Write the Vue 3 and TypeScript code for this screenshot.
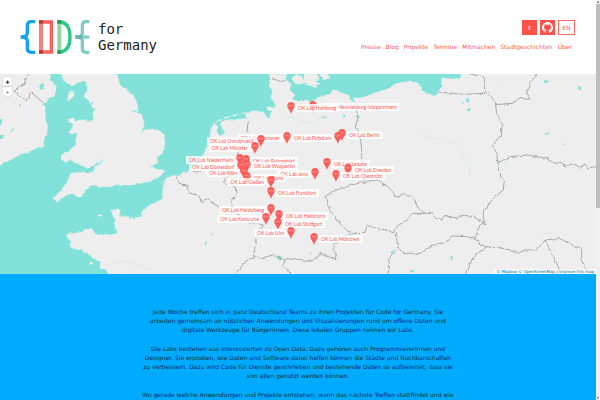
<script setup lang="ts">
interface Lab {
  name: string
  x: number
  y: number
  side: 'left' | 'right'
}

const nav: string[] = ['Presse', 'Blog', 'Projekte', 'Termine', 'Mitmachen', 'Stadtgeschichten', 'Über']

// Pin centres, in pixels from the map's top left corner
const labs: Lab[] = [
  { name: 'Mecklenburg-Vorpommern', x: 313, y: 33, side: 'right' },
  { name: 'Hamburg', x: 291, y: 34, side: 'right' },
  { name: 'Berlin', x: 342, y: 61, side: 'right' },
  { name: 'Potsdam', x: 338, y: 64, side: 'left' },
  { name: 'Hannover', x: 287, y: 64, side: 'left' },
  { name: 'Osnabrueck', x: 261, y: 67, side: 'left' },
  { name: 'Münster', x: 255, y: 74, side: 'left' },
  { name: 'Niederrhein', x: 240, y: 86, side: 'left' },
  { name: 'Ruhrgebiet', x: 246, y: 87, side: 'right' },
  { name: 'Leipzig', x: 327, y: 90, side: 'right' },
  { name: 'Wuppertal', x: 247, y: 92, side: 'right' },
  { name: 'Düsseldorf', x: 241, y: 93, side: 'left' },
  { name: 'Dresden', x: 348, y: 96, side: 'right' },
  { name: 'Köln', x: 244, y: 99, side: 'left' },
  { name: 'Jena', x: 315, y: 100, side: 'left' },
  { name: 'Chemnitz', x: 336, y: 102, side: 'right' },
  { name: 'Bonn', x: 247, y: 104, side: 'right' },
  { name: 'Gießen', x: 271, y: 108, side: 'left' },
  { name: 'Frankfurt', x: 271, y: 119, side: 'right' },
  { name: 'Heidelberg', x: 271, y: 136, side: 'left' },
  { name: 'Heilbronn', x: 279, y: 142, side: 'right' },
  { name: 'Karlsruhe', x: 266, y: 145, side: 'left' },
  { name: 'Stuttgart', x: 278, y: 150, side: 'right' },
  { name: 'Ulm', x: 291, y: 159, side: 'left' },
  { name: 'München', x: 314, y: 165, side: 'right' },
]

// Map outlines, three units to a pixel
const land: string[] = [
  '0,12 150,12 152,22 147,30 158,36 168,45 166,60 162,78 148,80 140,95 128,98 135,110 136,150 142,165 140,195 132,215 128,236 115,232 100,238 70,250 40,265 0,285',
  '183,12 190,30 200,38 215,45 235,38 245,30 258,30 262,38 257,45 265,55 255,70 258,85 270,100 285,90 278,105 285,120 276,130 280,150 270,157 258,150 240,150 225,155 222,145 208,147 208,155 222,165 215,180 203,188 222,190 232,186 230,200 225,225 205,245 180,260 185,270 200,270 195,275 215,270 235,282 262,294 280,285 308,267 298,282 285,290 282,305 262,308 235,308 212,310 205,330 185,360 158,388 178,394 185,384 200,375 218,370 232,380 245,377 255,360 262,352 285,345 300,350 325,350 355,342 365,352 370,345 395,345 420,340 450,334 475,322 488,310 492,300 465,298 450,292 475,277 470,262 485,250 495,220 488,190 470,178 450,178 435,180 424,188 432,162 424,132 388,122 415,122 410,98 400,75 385,60 362,48 350,12',
  '205,90 200,78 212,66 222,68 216,84',
  '325,612 320,600 300,590 303,575 275,560 265,550 245,540 215,533 208,522 222,518 205,510 200,495 215,490 240,488 255,480 275,478 290,497 310,492 330,495 355,490 345,470 345,450 333,420 355,418 362,440 400,445 425,440 420,430 450,405 470,397 488,386 490,330 500,325 540,315 570,300 595,280 615,245 628,215 633,180 643,160 652,168 650,188 662,198 675,190 668,175 660,165 668,152 710,148 742,146 740,130 755,122 790,125 797,140 808,148 815,128 803,118 800,108 812,108 824,118 825,102 813,84 818,60 808,50 812,28 807,12 860,12 855,30 872,40 870,60 885,75 875,85 895,95 920,90 935,100 950,85 980,75 1015,66 1045,75 1050,90 1065,95 1060,84 1080,85 1110,75 1155,60 1190,40 1230,35 1255,40 1265,60 1290,75 1310,74 1325,50 1325,25 1365,28 1382,25 1382,12 1788,12 1788,612',
  '878,22 890,14 905,20 914,36 900,42 882,38',
  '912,14 950,12 956,26 944,34 958,40 946,54 936,44 924,48 914,34',
  '960,14 982,12 990,24 972,30',
  '990,72 1000,60 1016,62 1018,74 1006,80',
  '295,432 302,432 304,438 296,438',
  '268,578 276,576 278,582 270,582',
]

const borders: string[] = [
  '85,12 70,45 55,50 45,65 80,92 95,68 110,82 130,98',
  '530,318 538,340 560,345 570,370 595,375 605,395 622,385 640,400 670,420 705,430 745,455 790,465 770,500 760,560 735,575 708,612',
  '745,155 740,190 722,215 718,240 708,262 700,290 692,312 676,322 674,340 690,342 706,352 708,375 692,398 704,420',
  '570,300 590,306 620,295 650,298 680,310 692,312',
  '760,560 790,566 808,555 830,560 855,570 850,590 870,605 872,612',
  '855,570 895,565 910,575 950,566 960,550 1010,570 1010,555 1000,540 1005,520 1050,492 1095,490 1100,465 1130,475 1180,485 1190,470 1220,450 1240,430 1275,430 1255,415 1240,385 1210,370 1190,382 1180,370 1165,350 1130,330 1100,334 1055,345 1010,360 975,380 990,420 1020,460 1050,490',
  '1064,100 1070,120 1072,150 1065,175 1080,190 1085,240 1085,290 1095,332',
  '815,26 835,32 856,36',
  '1185,485 1195,532 1175,555 1165,575 1165,612',
  '1195,534 1210,550 1265,550 1290,530 1310,520 1335,520 1355,498 1400,500 1425,505 1440,465 1450,458',
  '1275,430 1290,430 1296,424 1306,444 1325,450 1334,436 1350,440 1375,445 1390,435 1420,440 1455,462',
  '1410,12 1450,20 1455,65 1485,90 1490,130 1505,160 1505,195 1475,230 1490,245 1495,300 1512,335 1510,360 1480,385 1450,425 1450,450 1458,462',
  '1315,66 1390,73 1455,70',
  '1488,104 1510,102 1540,100 1555,85 1590,88 1580,70 1590,40 1610,12',
  '1495,280 1530,260 1580,255 1640,265 1660,280 1680,278 1700,288 1720,280 1738,292 1755,282 1765,294 1788,290',
  '1425,505 1440,525 1460,530 1505,535 1535,540 1555,550 1575,540 1610,540 1635,510 1675,505 1720,525 1745,540 1745,570 1765,612',
  '1635,510 1655,550 1685,612',
  '1460,530 1420,560 1398,612',
]

const lakes: string[] = [
  '118,42 132,40 130,58 120,56',
  '0,150 8,148 4,166 0,164',
  '34,182 42,172 38,186 30,186',
  '0,196 14,194 8,204 0,204',
  '54,104 64,108 58,112',
  '828,556 846,568 842,572 826,560',
  '1400,84 1408,86 1406,98 1398,94',
  '1400,116 1412,114 1410,124 1402,122',
  '1386,96 1394,98 1388,102',
  '1632,32 1646,30 1644,38 1630,38',
  '1734,46 1744,48 1742,62 1738,60',
  '1632,190 1652,186 1650,192 1634,194',
  '1686,218 1694,220 1690,224',
  '1500,48 1504,46 1502,52',
  '1232,604 1244,600 1240,608 1230,610',
  '1172,542 1182,540 1176,554',
  '1072,138 1082,142 1074,146',
  '1026,134 1038,142 1030,146',
  '966,142 980,138 976,146',
  '1350,566 1360,556 1354,572',
  '612,520 622,512 618,522',
  '632,494 638,492 634,498',
  '925,545 935,548 929,552',
]

const rivers: string[] = [
  '1290,202 1330,212 1355,222 1380,210',
  '1250,182 1290,202',
  '1382,240 1400,275 1412,290 1410,320',
  '1495,285 1520,278',
  '1620,494 1640,490 1665,492',
  '1000,180 1010,200 995,220',
  '340,578 370,575 400,582 450,600',
  '845,128 870,140 895,150 940,160',
]
</script>

<template>
  <div class="page">
    <header class="top">
      <a class="brand" href="#">
        <svg class="logo" viewBox="0 0 210 102" role="img" aria-label="CODE">
          <g fill="none" stroke-width="10">
            <path d="M45 5H34Q22 5 22 17V38Q22 51 6 51Q22 51 22 64V85Q22 97 34 97H45" stroke="#12a5ee" />
            <path d="M2 51H14" stroke="#12a5ee" />
            <path d="M57 6H99M94 1V101M99 96H57" stroke="#f8625c" />
            <path d="M63 1V101" stroke="#f0817b" stroke-width="12" />
            <path d="M57 6H69M57 96H69" stroke="#b93b3c" />
            <path d="M112 6H122Q150 10 150 51Q150 92 122 96H112" stroke="#2bc985" />
            <path d="M118 1V101" stroke="#91d5a2" stroke-width="12" />
            <path d="M112 6H124M112 96H124" stroke="#239953" />
            <path d="M208 5H198Q187 5 187 17V38Q187 51 170 51Q187 51 187 64V85Q187 97 198 97H208" stroke="#80cbc4" />
            <path d="M166 51H208" stroke="#80cbc4" />
            <path d="M166 51H187" stroke="#62b5ad" />
          </g>
        </svg>
        <span class="brand-text">for<br>Germany</span>
      </a>
      <div class="side">
        <div class="social">
          <a class="box solid" href="#">t</a>
          <a class="box solid" href="#" aria-label="GitHub">
            <svg class="github" viewBox="0 0 16 16" aria-hidden="true">
              <path fill="#fff" d="M8 0C3.58 0 0 3.58 0 8c0 3.54 2.29 6.53 5.47 7.59.4.07.55-.17.55-.38 0-.19-.01-.82-.01-1.49-2.01.37-2.53-.49-2.69-.94-.09-.23-.48-.94-.82-1.13-.28-.15-.68-.52-.01-.53.63-.01 1.08.58 1.23.82.72 1.21 1.87.87 2.33.66.07-.52.28-.87.51-1.07-1.78-.2-3.64-.89-3.64-3.95 0-.87.31-1.59.82-2.15-.08-.2-.36-1.02.08-2.12 0 0 .67-.21 2.2.82a7.6 7.6 0 0 1 4 0c1.53-1.04 2.2-.82 2.2-.82.44 1.1.16 1.92.08 2.12.51.56.82 1.27.82 2.15 0 3.07-1.87 3.75-3.65 3.95.29.25.54.73.54 1.48 0 1.07-.01 1.93-.01 2.2 0 .21.15.46.55.38A8 8 0 0 0 16 8c0-4.42-3.58-8-8-8z" />
            </svg>
          </a>
          <a class="box outline" href="#">EN</a>
        </div>
        <nav class="nav">
          <a v-for="item in nav" :key="item" href="#">{{ item }}</a>
        </nav>
      </div>
    </header>

    <section class="map">
      <svg class="tiles" viewBox="0 12 1788 600" preserveAspectRatio="xMinYMin slice" aria-hidden="true">
        <defs>
          <filter id="rough" x="-20" y="0" width="2420" height="640" filterUnits="userSpaceOnUse">
            <feTurbulence type="fractalNoise" baseFrequency="0.07" numOctaves="2" seed="4" />
            <feDisplacementMap in="SourceGraphic" scale="11" xChannelSelector="R" yChannelSelector="G" />
          </filter>
        </defs>
        <rect y="12" width="2400" height="600" fill="#82e1d8" />
        <g filter="url(#rough)">
          <polygon v-for="p in land" :key="p" :points="p" fill="#eee" stroke="#eee" stroke-width="2" />
          <path d="M1382 0H2400V14H1382ZM1780 0H2400V640H1780ZM324 606H2400V640H324ZM0 0H150V14H0ZM183 0H350V14H183ZM-20 0H2V285H-20Z" fill="#eee" />
          <polyline points="634,172 650,154 680,142 715,134 735,130" fill="none" stroke="#eee" stroke-width="4" stroke-dasharray="18 6" />
          <polygon v-for="p in lakes" :key="p" :points="p" fill="#82e1d8" />
          <polyline v-for="p in rivers" :key="p" :points="p" fill="none" stroke="#cfe6e4" stroke-width="2" />
          <polyline v-for="p in borders" :key="p" :points="p" fill="none" stroke="#a9a9a9" stroke-width="3" stroke-linejoin="round" />
        </g>
      </svg>

      <div
        v-for="lab in labs"
        :key="lab.name"
        class="marker"
        :class="lab.side"
        :style="{ left: lab.x + 'px', top: lab.y + 'px' }"
      >
        <svg class="pin" viewBox="0 0 24 36" aria-hidden="true">
          <path d="M12 0C5 0 1 5 1 11C1 19 8 22 12 36C16 22 23 19 23 11C23 5 19 0 12 0Z" fill="#fc5c58" />
          <path d="M8 8L5 11L8 14M16 8L19 11L16 14M10 9V13M14 9V13" fill="none" stroke="#fdc9c6" stroke-width="1.500" />
        </svg>
        <span class="label">OK Lab {{ lab.name }}</span>
      </div>

      <div class="zoom">
        <button type="button" aria-label="Zoom in">+</button>
        <button type="button" aria-label="Zoom out">-</button>
      </div>
      <div class="credit">
        <a href="#">© Mapbox</a> <a href="#">© OpenStreetMap</a> | <a href="#">Improve this map</a>
      </div>
    </section>

    <main class="intro">
      <p>Jede Woche treffen sich in ganz Deutschland Teams zu ihren Projekten für Code for Germany. Sie arbeiten gemeinsam an nützlichen Anwendungen und Visualisierungen rund um offene Daten und digitale Werkzeuge für Bürgerinnen. Diese lokalen Gruppen nennen wir Labs.</p>
      <p>Die Labs bestehen aus Interessierten zu Open Data. Dazu gehören auch Programmiererinnen und Designer. Sie erproben, wie Daten und Software dabei helfen können die Städte und Nachbarschaften zu verbessern. Dazu wird Code für Dienste geschrieben und bestehende Daten so aufbereitet, dass sie von allen genutzt werden können.</p>
      <p>Wo gerade welche Anwendungen und Projekte entstehen, wann das nächste Treffen stattfindet und wie</p>
    </main>
    <div class="scrollbar" aria-hidden="true">
      <svg class="arrow" viewBox="0 0 4 4"><path d="M1 3L2 1L3 3Z" fill="#505050" /></svg>
      <div class="track"><div class="thumb"></div></div>
      <svg class="arrow" viewBox="0 0 4 4"><path d="M1 1L2 3L3 1Z" fill="#505050" /></svg>
    </div>
  </div>
</template>

<style>
body {
  overflow: hidden;
  background: #fff;
}
</style>

<style scoped>
.page {
  box-sizing: border-box;
  min-height: 100vh;
  padding-right: 4px;
  display: flex;
  flex-direction: column;
  font-family: "DejaVu Sans", sans-serif;
  font-size: 6px;
  line-height: 9px;
}
a {
  color: inherit;
  text-decoration: none;
}
.top {
  box-sizing: border-box;
  min-height: 74px;
  padding: 20px 21px 0 20px;
  display: flex;
  justify-content: space-between;
  align-items: flex-start;
}
.brand {
  display: flex;
  gap: 8px;
  color: #222;
}
.logo {
  width: 70px;
  height: 34px;
}
.brand-text {
  padding-top: 1px;
  font-family: "DejaVu Sans Mono", monospace;
  font-size: 14px;
  line-height: 16px;
}
.side {
  display: flex;
  flex-direction: column;
  align-items: flex-end;
  gap: 7px;
  color: #fc5c58;
}
.social {
  display: flex;
  gap: 3px;
}
.box {
  box-sizing: border-box;
  min-width: 15px;
  height: 15px;
  display: flex;
  align-items: center;
  justify-content: center;
}
.solid {
  background: #fd5248;
  color: #fff;
}
.outline {
  min-width: 17px;
  border: 1px solid #fd6b64;
}
.github {
  width: 11px;
  height: 11px;
}
.nav {
  display: flex;
  gap: 5px;
  padding-right: 3px;
}
.map {
  position: relative;
  height: 200px;
  overflow: hidden;
}
.tiles {
  display: block;
  width: 100%;
  height: 100%;
}
.marker {
  position: absolute;
  width: 0;
  height: 0;
  display: flex;
  align-items: center;
}
.marker.left {
  flex-direction: row-reverse;
}
.pin {
  flex: none;
  width: 8px;
  height: 12px;
  margin: 0 -4px;
}
.label {
  flex: none;
  padding: 0 3px;
  background: rgba(255, 255, 255, 0.75);
  color: #fc5c58;
  font-family: Lato, sans-serif;
  font-size: 5px;
  line-height: 8px;
  white-space: nowrap;
}
.right .label {
  margin-left: 4px;
}
.left .label {
  margin-right: 4px;
}
.zoom {
  position: absolute;
  top: 3px;
  left: 3px;
  display: flex;
  flex-direction: column;
  gap: 1px;
  border-radius: 2px;
  background: #ccc;
  box-shadow: 0 0 1px #888;
  overflow: hidden;
}
.zoom button {
  width: 9px;
  height: 9px;
  padding: 0;
  border: 0;
  background: #fff;
  color: #000;
  font: bold 6px/8px "DejaVu Sans", sans-serif;
}
.credit {
  position: absolute;
  right: 0;
  bottom: 0;
  padding: 0 2px;
  background: rgba(255, 255, 255, 0.7);
  color: #333;
  font-family: "DejaVu Sans", sans-serif;
  font-size: 4px;
  line-height: 5px;
}
.credit a {
  color: #0078a8;
}
.intro {
  flex: 1;
  padding: 33px 20px 0;
  background: #00aaff;
  color: #08304a;
  text-align: center;
}
.intro p {
  max-width: 314px;
  margin: 0 auto 10px;
}
.scrollbar {
  position: fixed;
  top: 0;
  right: 0;
  bottom: 0;
  width: 4px;
  display: flex;
  flex-direction: column;
  background: #f1f1f1;
}
.arrow {
  width: 4px;
  height: 4px;
}
.track {
  flex: 1;
}
.thumb {
  height: 52%;
  background: #bebebe;
}
</style>
